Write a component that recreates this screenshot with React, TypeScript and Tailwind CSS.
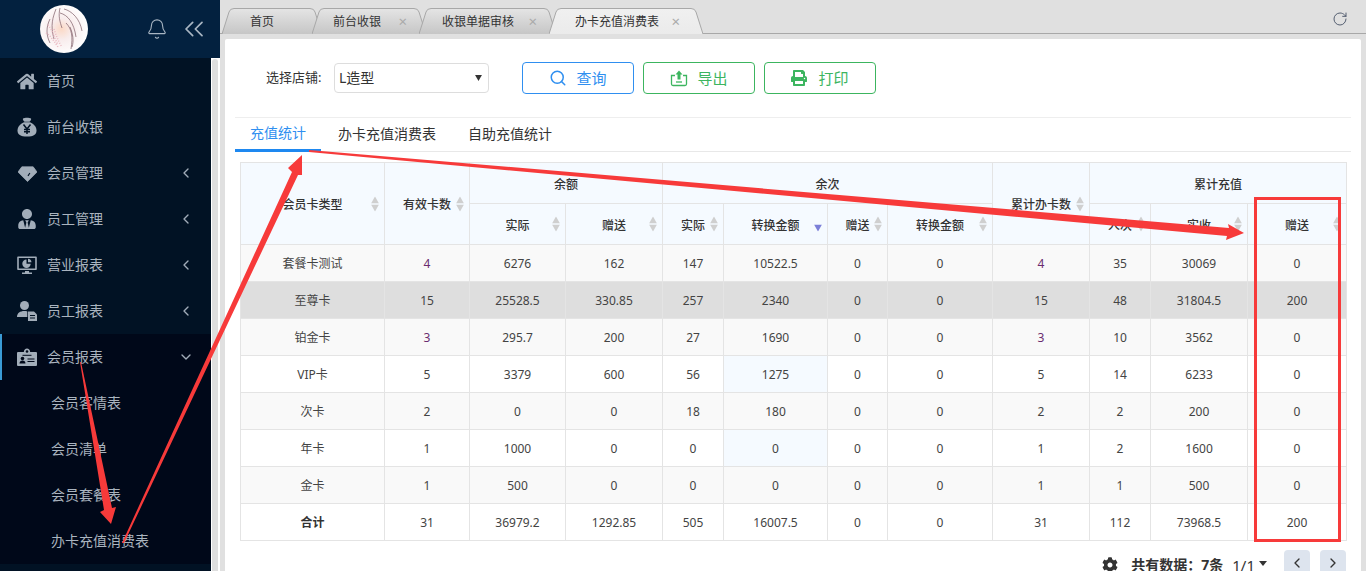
import React from "react";
import { Bell, ChevronsLeft, ChevronLeft, ChevronDown, ChevronRight, RotateCw, Search } from "lucide-react";
import { FaHome, FaUserTie, FaPrint, FaCog } from "react-icons/fa";

const Bag = () => (
  <svg viewBox="0 0 20 20" className="w-5 h-5" fill="currentColor">
    <path d="M6 1.500c1.500-1 6.500-1 8 0 .6.800-.6 2.500-1.500 3.200h-5C6.600 4 5.400 2.300 6 1.500z" />
    <path d="M7 5.300h6C17 7 19.500 10 19.500 13.500c0 4-3 6-9.500 6S.5 17.500.5 13.500C.5 10 3 7 7 5.300z" />
    <path d="M6.500 7.500 10 12l3.500-4.500M10 12v5M7 12.500h6M7 14.800h6" fill="none" stroke="#011224" strokeWidth="1.500" />
  </svg>
);
const Gem = () => (
  <svg viewBox="0 0 20 20" className="w-[19px] h-[19px]" fill="currentColor">
    <path d="M4 3h12l4 5.500L10 18.500 0 8.500z" stroke="currentColor" strokeLinejoin="round" strokeWidth="0.800" />
    <path d="M12.500 9.500 10.500 12.500" stroke="#011224" strokeWidth="1.200" fill="none" />
  </svg>
);
const Monitor = () => (
  <svg viewBox="0 0 20 20" className="w-5 h-5" fill="currentColor">
    <path d="M1 1.500h18a.8.8 0 0 1 .8.800v12a.8.8 0 0 1-.8.800H1a.8.8 0 0 1-.8-.800v-12A.8.8 0 0 1 1 1.500zm.8 1.600v10.400h16.400V3.100z" fillRule="evenodd" />
    <path d="M8 16h4v1.500h3V19H5v-1.500h3z" />
    <path d="M9.500 4.500v4.200h4.200a4.200 4.200 0 1 1-4.200-4.200z" />
    <path d="M11 3.800a4 4 0 0 1 3.500 3.500H11z" />
  </svg>
);
const UserFile = () => (
  <svg viewBox="0 0 20 20" className="w-5 h-5" fill="currentColor">
    <circle cx="7.500" cy="4.500" r="4.500" />
    <path d="M0 16c0-4 3-6 7.500-6 1 0 2 .1 2.800.4V16z" />
    <path d="M11 10.500h6l3 3V20h-9z" />
    <path d="M13 14.500h5M13 17h5" stroke="#011224" strokeWidth="1.200" />
  </svg>
);
const IdCard = () => (
  <svg viewBox="0 0 20 20" className="w-5 h-5" fill="currentColor">
    <path d="M1 5h5.800C7 3 8.300 1.500 10 1.500S13 3 13.200 5H19a1 1 0 0 1 1 1v12a1 1 0 0 1-1 1H1a1 1 0 0 1-1-1V6a1 1 0 0 1 1-1z" />
    <circle cx="10" cy="4.500" r="1.300" fill="#000819" />
    <path d="M5.500 8.300h9" stroke="#000819" strokeWidth="1" />
    <circle cx="5.500" cy="11.500" r="1.800" fill="#000819" />
    <path d="M2.500 16.500c0-2 1.300-3 3-3s3 1 3 3z" fill="#000819" />
    <path d="M10.500 12h7M10.500 14.500h7" stroke="#000819" strokeWidth="1.200" />
  </svg>
);

const iconBox = "w-5 h-5 flex items-center justify-center";
const menu: { label: string; icon: React.ReactNode; arrow?: "l" | "d"; active?: boolean }[] = [
  { label: "首页", icon: <FaHome className="w-[21px] h-[21px]" /> },
  { label: "前台收银", icon: <Bag /> },
  { label: "会员管理", icon: <Gem />, arrow: "l" },
  { label: "员工管理", icon: <FaUserTie className="w-5 h-5" />, arrow: "l" },
  { label: "营业报表", icon: <Monitor />, arrow: "l" },
  { label: "员工报表", icon: <UserFile />, arrow: "l" },
  { label: "会员报表", icon: <IdCard />, arrow: "d", active: true },
];
const subs = ["会员客情表", "会员清单", "会员套餐表", "办卡充值消费表"];

function TabCapL({ active }: { active?: boolean }) {
  const id = active ? "tabA" : "tabB";
  return (
    <svg width="12" height="26" viewBox="0 0 12 26" className="shrink-0 block">
      <defs>
        <linearGradient id={id + "l"} x1="0" y1="0" x2="0" y2="1">
          <stop offset="0" stopColor={active ? "#f0f0f0" : "#e4e4e4"} />
          <stop offset="1" stopColor={active ? "#ebebeb" : "#c6c6c6"} />
        </linearGradient>
      </defs>
      <path d="M0 26 L7 4 Q8 .5 12 .5 V26 Z" fill={`url(#${id}l)`} />
      <path d="M0 26 L7 4 Q8 .5 12 .5" fill="none" stroke="#a8a8a8" />
    </svg>
  );
}
function TabCapR({ active }: { active?: boolean }) {
  const id = active ? "tabA" : "tabB";
  return (
    <svg width="12" height="26" viewBox="0 0 12 26" className="shrink-0 block">
      <defs>
        <linearGradient id={id + "r"} x1="0" y1="0" x2="0" y2="1">
          <stop offset="0" stopColor={active ? "#f0f0f0" : "#e4e4e4"} />
          <stop offset="1" stopColor={active ? "#ebebeb" : "#c6c6c6"} />
        </linearGradient>
      </defs>
      <path d="M12 26 L5 4 Q4 .5 0 .5 V26 Z" fill={`url(#${id}r)`} />
      <path d="M12 26 L5 4 Q4 .5 0 .5" fill="none" stroke="#a8a8a8" />
    </svg>
  );
}
function Tab({ label, w, close, active, ml, z, pad, endPad }: { label: string; w: string; close?: boolean; active?: boolean; ml: string; z: string; pad: string; endPad?: string }) {
  return (
    <div className={`flex h-[26px] relative ${ml} ${z}`}>
      <TabCapL active={active} />
      <div className={`${w} flex items-center border-t border-[#a8a8a8] text-xs text-[#333] ${active ? "bg-gradient-to-b from-[#f0f0f0] to-[#ebebeb]" : "bg-gradient-to-b from-[#e4e4e4] to-[#c6c6c6]"}`}>
        <span className={pad}>{label}</span>
        {close && <span className={`ml-auto ${endPad} text-[15px] leading-none text-[#aaa]`}>×</span>}
      </div>
      <TabCapR active={active} />
    </div>
  );
}

function Sort({ desc }: { desc?: boolean }) {
  return (
    <span className="absolute right-[5px] top-1/2 -translate-y-1/2 flex flex-col gap-[1px]">
      <svg width="8" height="7" viewBox="0 0 8 7" className="block"><path d="M4 0 8 7H0z" fill={desc ? "transparent" : "#cfcfcf"} /></svg>
      <svg width="8" height="7" viewBox="0 0 8 7" className="block"><path d="M4 7 8 0H0z" fill={desc ? "#7b7fd8" : "#cfcfcf"} /></svg>
    </span>
  );
}

const th = "relative border border-[#e4e4e4] bg-[#f5faff] text-xs font-medium text-[#333] text-center p-0 pt-[3px]";
function Th({ children, sort, desc, rowSpan, colSpan }: { children: React.ReactNode; sort?: boolean; desc?: boolean; rowSpan?: number; colSpan?: number }) {
  return (
    <th className={th} rowSpan={rowSpan} colSpan={colSpan}>
      {children}
      {sort && <Sort desc={desc} />}
    </th>
  );
}

const rows = [
  ["套餐卡测试", "4", "6276", "162", "147", "10522.5", "0", "0", "4", "35", "30069", "0"],
  ["至尊卡", "15", "25528.5", "330.85", "257", "2340", "0", "0", "15", "48", "31804.5", "200"],
  ["铂金卡", "3", "295.7", "200", "27", "1690", "0", "0", "3", "10", "3562", "0"],
  ["VIP卡", "5", "3379", "600", "56", "1275", "0", "0", "5", "14", "6233", "0"],
  ["次卡", "2", "0", "0", "18", "180", "0", "0", "2", "2", "200", "0"],
  ["年卡", "1", "1000", "0", "0", "0", "0", "0", "1", "2", "1600", "0"],
  ["金卡", "1", "500", "0", "0", "0", "0", "0", "1", "1", "500", "0"],
  ["合计", "31", "36979.2", "1292.85", "505", "16007.5", "0", "0", "31", "112", "73968.5", "200"],
];
const rowBg = ["bg-[#f9f9f9]", "bg-[#dedede]", "bg-[#f9f9f9]", "bg-white", "bg-[#f9f9f9]", "bg-white", "bg-[#f9f9f9]", "bg-white"];
const colW = ["w-[144px]", "w-[85px]", "w-[96px]", "w-[97px]", "w-[61px]", "w-[104px]", "w-[60px]", "w-[105px]", "w-[97px]", "w-[61px]", "w-[97px]", "w-[99px]"];

export default function App() {
  return (
    <div className="relative flex w-[1366px] h-[571px] overflow-hidden bg-[#e0e0e0] font-['Noto_Sans','Noto_Sans_CJK_SC',sans-serif]">
      <aside className="w-[220px] shrink-0 flex flex-col">
        <div className="h-[58px] bg-[#03213f] flex items-center">
          <svg width="48" height="48" viewBox="0 0 48 48" className="ml-[40px] shrink-0">
            <defs>
              <radialGradient id="av" cx="0.45" cy="0.5" r="0.55">
                <stop offset="0" stopColor="#fbd9c6" />
                <stop offset="0.4" stopColor="#f8ecec" />
                <stop offset="1" stopColor="#ffffff" />
              </radialGradient>
            </defs>
            <circle cx="24" cy="24" r="24" fill="url(#av)" />
            <path d="M16 4c-3 8-6 16-2 30M20 3c-2 8 0 14 2 20M24 4c8 2 16 10 18 22M20 8c8 2 14 10 16 24M26 18c6 6 7 14 5 26M30 22c3 7 4 14 2 20M10 14c-4 8-4 16 0 24" fill="none" stroke="#7c5b66" strokeWidth="0.700" />
            <path d="M8 20c4 4 6 12 10 20M6 28c4 2 8 8 12 14M14 24c2 6 4 12 8 18" fill="none" stroke="#eab9c2" strokeWidth="1.500" strokeDasharray="1 1.500" />
          </svg>
          <Bell className="ml-[58px] w-[22px] h-[22px] text-[#a9b6c3]" strokeWidth={1.200} />
          <ChevronsLeft className="ml-[10px] w-[32px] h-[32px] text-[#a9b6c3]" strokeWidth={1.300} />
        </div>
        <div className="flex-1 flex bg-white min-h-0">
          <nav className="w-[211px] bg-[#011224] text-sm text-[#aab4bf]">
            {menu.map((m) => (
              <div key={m.label} className={`h-[46px] flex items-center relative ${m.active ? "bg-[#000819] border-l-2 border-[#3a9ad4] pl-[15px]" : "pl-[17px]"}`}>
                <span className={`${iconBox} text-[#a2adb9]`}>{m.icon}</span>
                <span className="ml-[10px]">{m.label}</span>
                {m.arrow === "l" && <ChevronLeft className="ml-auto mr-[17px] w-[16px] h-[16px] text-[#a2adb9]" />}
                {m.arrow === "d" && <ChevronDown className="ml-auto mr-[17px] w-[16px] h-[16px] text-[#a2adb9]" />}
              </div>
            ))}
            <div className="bg-[#000819]">
              {subs.map((s) => (
                <div key={s} className="h-[46px] flex items-center pl-[51px]">{s}</div>
              ))}
            </div>
          </nav>
          <div className="w-[9px] pl-[1px] pt-[1px]">
            <div className="w-[6px] h-full bg-[#dedede] rounded-t-[3px]" />
          </div>
        </div>
      </aside>

      <main className="flex-1 min-w-0 flex flex-col">
        <div className="h-[34px] shrink-0 border-b border-[#a8a8a8] flex items-end pl-[2px] relative">
          <div className="flex -mb-[1px]">
            <Tab label="首页" w="w-[76px]" ml="ml-0" z="z-[1]" pad="ml-[16px]" />
            <Tab label="前台收银" w="w-[90px]" close ml="-ml-[10px]" z="z-[2]" pad="ml-[9px]" endPad="mr-[7px]" />
            <Tab label="收银单据审核" w="w-[113px]" close ml="-ml-[7px]" z="z-[3]" pad="ml-[11px]" endPad="mr-[7px]" />
            <Tab label="办卡充值消费表" w="w-[130px]" close active ml="-ml-[7px]" z="z-[4]" pad="ml-[14px]" endPad="mr-[11px]" />
          </div>
          <RotateCw className="absolute right-[18px] top-[11px] w-[16px] h-[16px] text-[#4a5568]" strokeWidth={1.400} />
        </div>
        <div className="mt-[5px] ml-[5px] mr-[5px] flex-1 min-h-0 bg-white rounded-t-[2px] px-[10px]">
          <div className="h-[79px] flex items-center pl-[31px] border-b border-[#eeeeee]">
            <span className="text-[13px] text-[#333] w-[68px]">选择店铺:</span>
            <div className="w-[155px] h-[30px] border border-[#dddddd] rounded-[4px] flex items-center pl-[4px] pr-[6px] text-sm text-[#333]">
              <span>L造型</span>
              <svg width="7" height="6" viewBox="0 0 8 7" className="ml-auto"><path d="M0 0h8L4 7z" fill="#333" /></svg>
            </div>
            <button className="ml-[33px] w-[112px] h-[32px] border border-[#2f8ff0] rounded-[4px] flex items-center justify-center text-[15px] text-[#2f8ff0]">
              <Search className="w-[18px] h-[18px] mr-[9px]" strokeWidth={2} />查询
            </button>
            <button className="ml-[9px] w-[112px] h-[32px] border border-[#3cb55f] rounded-[4px] flex items-center justify-center text-[15px] text-[#3cb55f]">
              <svg viewBox="0 0 18 18" className="w-[18px] h-[18px] mr-[9px]" fill="none" stroke="currentColor" strokeWidth="1.300">
                <path d="M5 6.500H1.500v8.500a1.500 1.500 0 0 0 1.500 1.500h12a1.500 1.500 0 0 0 1.500-1.500V6.500H13" />
                <path d="M9 1.500 5.500 5.500H7.500v5h3v-5h2z" fill="currentColor" stroke="none" />
                <path d="M6 13h6" />
              </svg>
              导出
            </button>
            <button className="ml-[9px] w-[112px] h-[32px] border border-[#3cb55f] rounded-[4px] flex items-center justify-center text-[15px] text-[#3cb55f]">
              <FaPrint className="w-[16px] h-[16px] mr-[11px]" />打印
            </button>
          </div>
          <div className="h-[34px] flex items-stretch border-b border-[#e8e8e8] text-sm text-[#333]">
            <div className="w-[86px] -mb-[1px] border-b-[3px] border-[#1e88f0] text-[#2f8ff0] flex items-center justify-center pb-[1px]">充值统计</div>
            <div className="ml-[17px] flex items-center pb-[2px]">办卡充值消费表</div>
            <div className="ml-[32px] flex items-center pb-[2px]">自助充值统计</div>
          </div>
          <div className="pt-[10px] pl-[5px]">
            <table className="table-fixed border-collapse w-[1106px] text-xs text-[#444]">
              <colgroup>
                {colW.map((c, i) => (
                  <col key={i} className={c} />
                ))}
              </colgroup>
              <thead>
                <tr className="h-[41px]">
                  <Th rowSpan={2} sort>会员卡类型</Th>
                  <Th rowSpan={2} sort>有效卡数</Th>
                  <Th colSpan={2}>余额</Th>
                  <Th colSpan={4}>余次</Th>
                  <Th rowSpan={2} sort>累计办卡数</Th>
                  <Th colSpan={3}>累计充值</Th>
                </tr>
                <tr className="h-[41px]">
                  <Th sort>实际</Th>
                  <Th sort>赠送</Th>
                  <Th sort>实际</Th>
                  <Th sort desc>转换金额</Th>
                  <Th sort>赠送</Th>
                  <Th sort>转换金额</Th>
                  <Th sort>人次</Th>
                  <Th sort>实收</Th>
                  <Th sort>赠送</Th>
                </tr>
              </thead>
              <tbody>
                {rows.map((r, i) => (
                  <tr key={i} className={`h-[37px] ${rowBg[i]}`}>
                    {r.map((c, j) => {
                      const purple = (j === 1 || j === 8) && (i === 0 || i === 2);
                      const tint = j === 5 && (i === 3 || i === 5);
                      const bold = i === 7 && j === 0;
                      return (
                        <td
                          key={j}
                          className={`border border-[#e4e4e4] text-center p-0 pt-[2px] ${purple ? "text-[#6a2c70]" : ""} ${tint ? "bg-[#f5faff]" : ""} ${bold ? "font-bold text-[#333]" : ""}`}
                        >
                          {c}
                        </td>
                      );
                    })}
                  </tr>
                ))}
              </tbody>
            </table>
            <div className="w-[1106px] mt-[9px] flex items-center justify-end h-[26px]">
              <FaCog className="w-[16px] h-[16px] text-[#333] mt-[3px]" />
              <span className="ml-[13px] mt-[4px] text-sm font-bold text-[#333] whitespace-nowrap">共有数据：7条</span>
              <span className="ml-[9px] mt-[4px] text-[15px] text-[#333]">1/1</span>
              <svg width="8" height="5" viewBox="0 0 8 5" className="ml-[4px]"><path d="M0 0h8L4 5z" fill="#333" /></svg>
              <div className="ml-[17px] w-[26px] h-[26px] rounded-[4px] bg-[#dde4ee] flex items-center justify-center">
                <ChevronLeft className="w-[16px] h-[16px] text-[#333]" />
              </div>
              <div className="ml-[10px] w-[26px] h-[26px] rounded-[4px] bg-[#dde4ee] flex items-center justify-center">
                <ChevronRight className="w-[16px] h-[16px] text-[#333]" />
              </div>
            </div>
          </div>
        </div>
      </main>

      {/* red annotation drawn over the screenshot */}
      <svg width="1366" height="571" viewBox="0 0 1366 571" className="absolute inset-0 pointer-events-none">
        <g fill="#f73a3a">
          <polygon points="80,362 81,362 112,508 116,507 111,524 100,512 104,510" />
          <polygon points="122,543 124,543 298,175 302,175 302,155 288,168 292,172" />
          <polygon points="309,150 1229,228 1228,224 1244,233 1226,240 1227,236 309,152" />
        </g>
        <rect x="1255.500" y="198.500" width="84" height="342" fill="none" stroke="#f73a3a" strokeWidth="3" />
      </svg>
    </div>
  );
}
